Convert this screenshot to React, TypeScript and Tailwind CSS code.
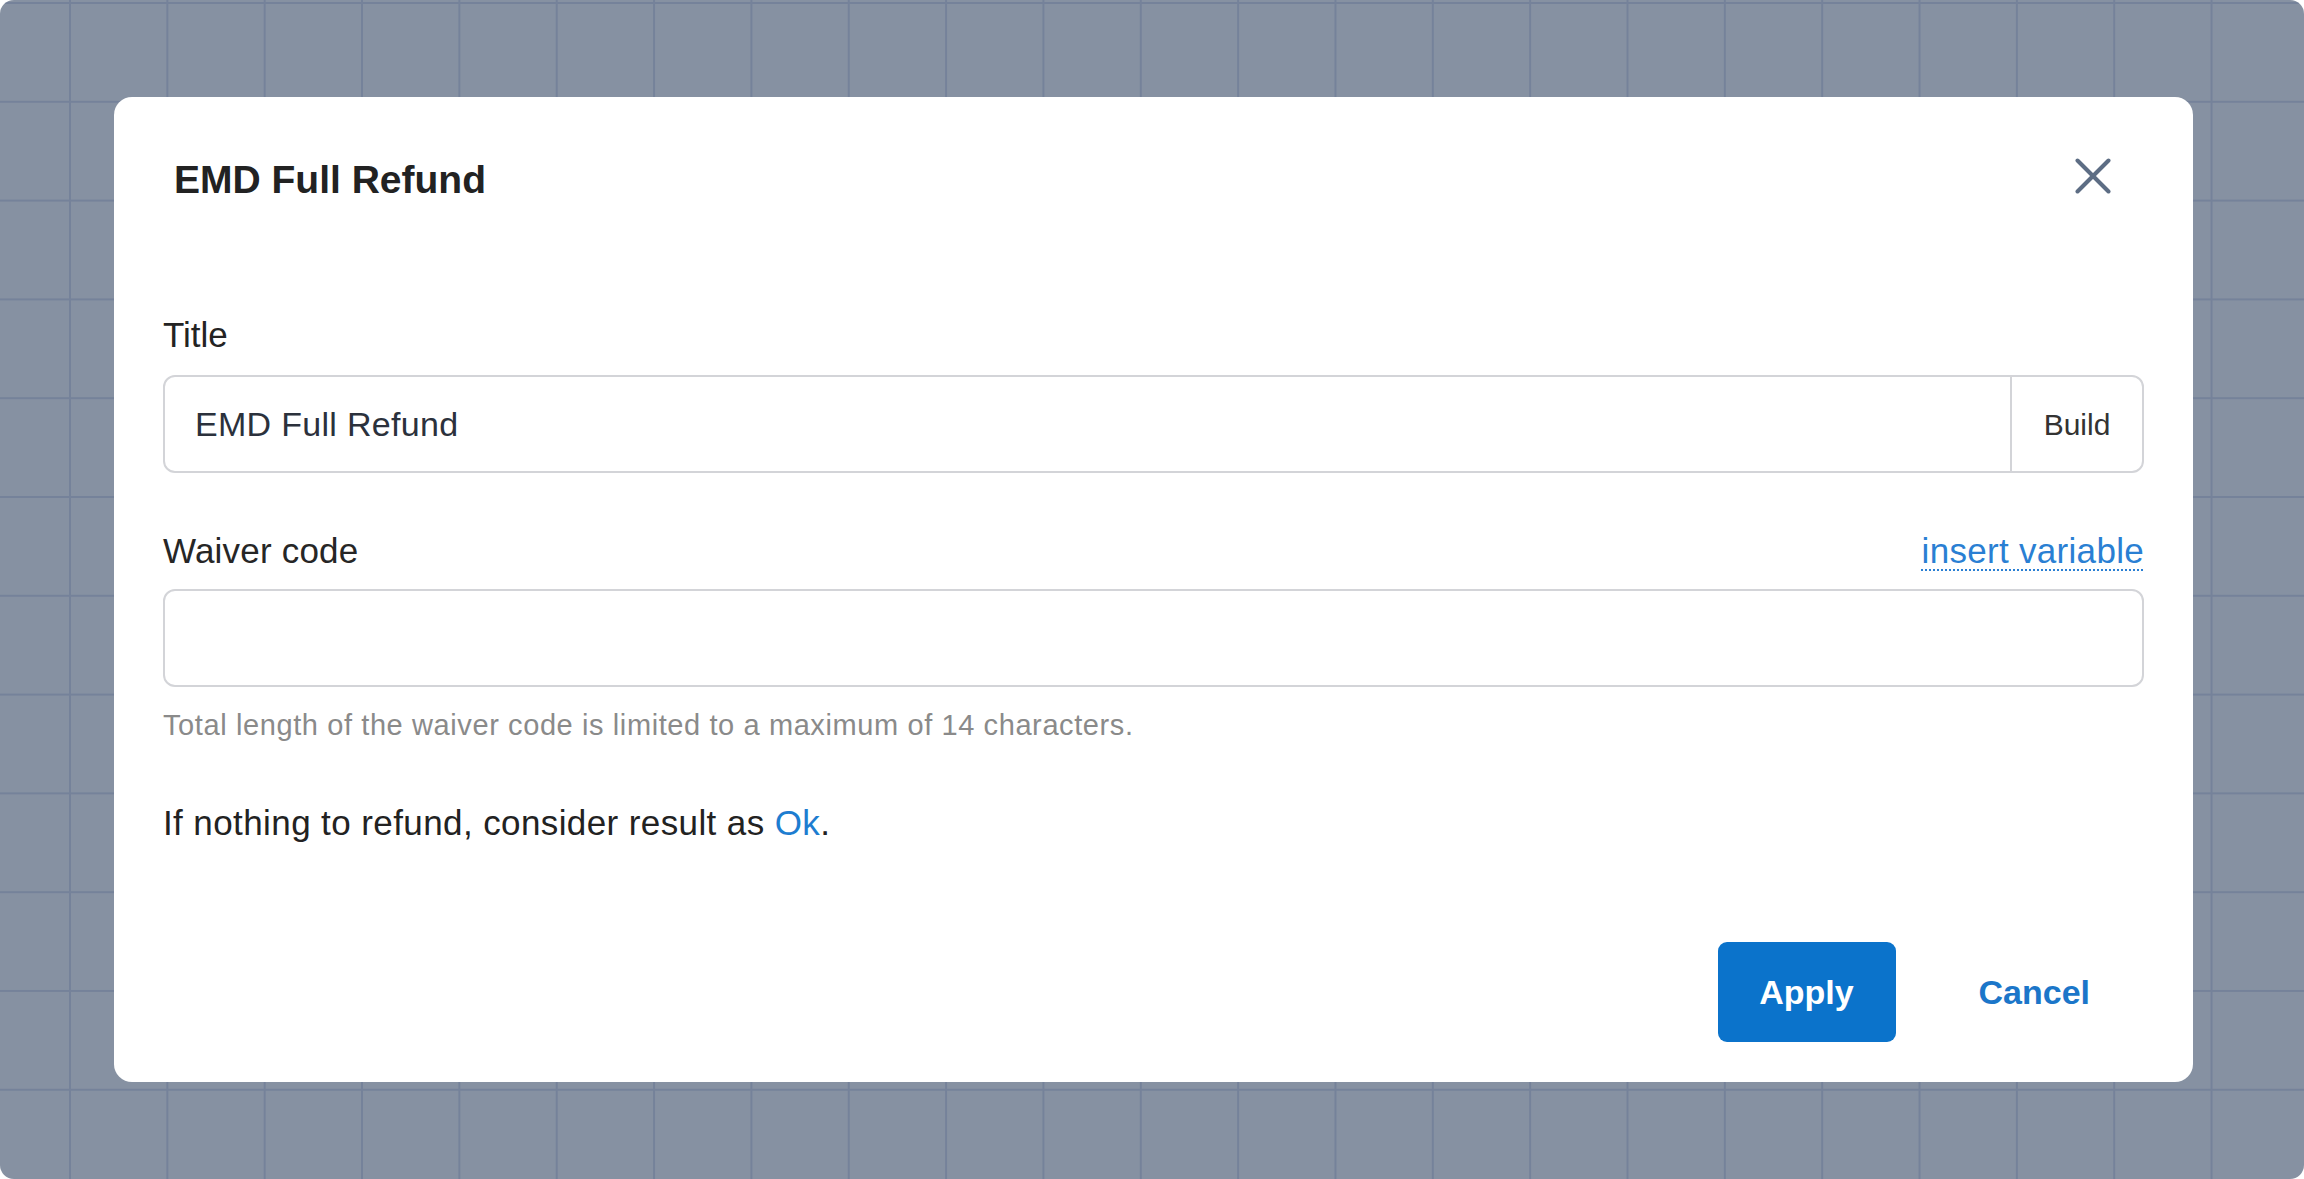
import React, { useState } from 'react';

const FONT = "font-['Liberation_Sans',Arial,sans-serif]";

function CloseIcon() {
  return (
    <svg width="36" height="36" viewBox="0 0 36 36" fill="none" stroke="#5d6d84" strokeWidth="4" strokeLinecap="round">
      <line x1="2.5" y1="2.5" x2="33.5" y2="33.5" />
      <line x1="33.5" y1="2.5" x2="2.5" y2="33.5" />
    </svg>
  );
}

export default function App() {
  const [title, setTitle] = useState('EMD Full Refund');
  const [waiver, setWaiver] = useState('');

  return (
    <div className={`${FONT} bg-white w-full h-[1179px]`}>
      {/* backdrop with the grid behind the dialog */}
      <div className="h-full w-full rounded-[14px] overflow-hidden bg-[#8691a2] bg-[linear-gradient(to_right,#75829a_2px,transparent_2px),linear-gradient(to_bottom,#75829a_2px,transparent_2px)] bg-[size:97.35px_98.8px] bg-[position:69px_2px] pt-[97px] pl-[114px]">
        <div className="w-[2079px] h-[985px] bg-white rounded-[18px] flex flex-col px-[49px] pb-[40px]">
          {/* header */}
          <div className="flex items-start justify-between pt-[60px] pl-[11px] pr-[33px]">
            <h2 className="text-[39px] leading-[46px] font-bold text-[#222222]">EMD Full Refund</h2>
            <button className="mt-[1px]" aria-label="Close">
              <CloseIcon />
            </button>
          </div>

          {/* title field */}
          <label className="mt-[112px] text-[35px] leading-[40px] text-[#232323]">Title</label>
          <div className="mt-[20px] flex h-[98px] rounded-[12px] border-2 border-[#d3d4d8] overflow-hidden">
            <input
              value={title}
              onChange={e => setTitle(e.target.value)}
              className="flex-1 min-w-0 px-[30px] text-[34px] tracking-[0.3px] text-[#2b313c] outline-none bg-transparent"
            />
            <button className="w-[132px] border-l-2 border-[#d3d4d8] text-[30px] text-[#333333]">Build</button>
          </div>

          {/* waiver code field */}
          <div className="mt-[58px] flex items-start justify-between">
            <label className="text-[35px] leading-[40px] tracking-[0.2px] text-[#262626]">Waiver code</label>
            <a
              href="#"
              className="text-[35px] leading-[40px] tracking-[0.3px] text-[#2a7fd3] underline decoration-dotted decoration-2 underline-offset-[6px]"
            >
              insert variable
            </a>
          </div>
          <input
            value={waiver}
            onChange={e => setWaiver(e.target.value)}
            className="mt-[18px] h-[98px] rounded-[12px] border-2 border-[#d3d4d8] px-[29px] text-[34px] text-[#2b313c] outline-none"
          />
          <p className="mt-[21px] text-[29px] leading-[34px] tracking-[0.6px] text-[#8a8a8a]">
            Total length of the waiver code is limited to a maximum of 14 characters.
          </p>

          <p className="mt-[61px] text-[35px] leading-[40px] tracking-[0.4px] text-[#222222]">
            If nothing to refund, consider result as <span className="text-[#1d7dd0]">Ok</span>.
          </p>

          {/* actions */}
          <div className="mt-auto flex justify-end items-center">
            <button className="w-[178px] h-[100px] rounded-[9px] bg-[#0b73cb] text-white text-[34px] font-bold">
              Apply
            </button>
            <button className="ml-[29px] h-[100px] px-[54px] text-[34px] font-bold text-[#1b76c9]">
              Cancel
            </button>
          </div>
        </div>
      </div>
    </div>
  );
}
